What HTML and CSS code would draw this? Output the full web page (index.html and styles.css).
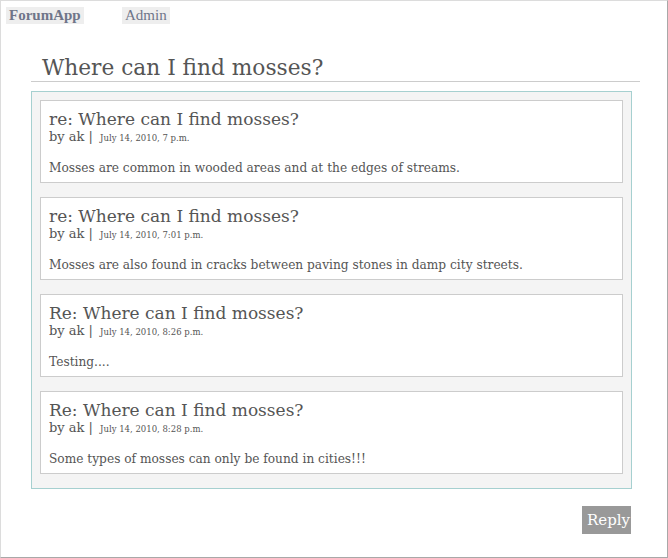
FILE: index.html
```html
<!DOCTYPE html>
<html>
<head>
<meta charset="utf-8">
<link rel="stylesheet" href="styles.css">
</head>
<body>
<div class="frame">
  <nav class="topnav">
    <a class="nav-link brand" href="#">ForumApp</a>
    <a class="nav-link" href="#">Admin</a>
  </nav>
  <main class="content">
    <h1 class="title">Where can I find mosses?</h1>
    <div class="thread">
      <div class="post">
        <h2 class="post-title">re: Where can I find mosses?</h2>
        <div class="meta">by ak <span class="sep">|</span> <span class="date">July 14, 2010, 7 p.m.</span></div>
        <p class="body">Mosses are common in wooded areas and at the edges of streams.</p>
      </div>
      <div class="post">
        <h2 class="post-title">re: Where can I find mosses?</h2>
        <div class="meta">by ak <span class="sep">|</span> <span class="date">July 14, 2010, 7:01 p.m.</span></div>
        <p class="body">Mosses are also found in cracks between paving stones in damp city streets.</p>
      </div>
      <div class="post">
        <h2 class="post-title">Re: Where can I find mosses?</h2>
        <div class="meta">by ak <span class="sep">|</span> <span class="date">July 14, 2010, 8:26 p.m.</span></div>
        <p class="body">Testing....</p>
      </div>
      <div class="post">
        <h2 class="post-title">Re: Where can I find mosses?</h2>
        <div class="meta">by ak <span class="sep">|</span> <span class="date">July 14, 2010, 8:28 p.m.</span></div>
        <p class="body">Some types of mosses can only be found in cities!!!</p>
      </div>
    </div>
    <div class="actions">
      <a class="reply" href="#">Reply</a>
    </div>
  </main>
</div>
</body>
</html>
```
FILE: styles.css
```css
html, body {
  margin: 0;
  padding: 0;
  background: #fff;
}
body {
  font-family: "DejaVu Serif", serif;
  color: #555;
}
.frame {
  box-sizing: border-box;
  width: 668px;
  height: 558px;
  border-top: 1px solid #dcdcdc;
  border-left: 1px solid #dcdcdc;
  border-right: 1px solid #a8a8a8;
  border-bottom: 1px solid #a8a8a8;
  padding: 6px 0 0 5px;
}
.topnav {
  display: flex;
  gap: 38px;
  height: 17px;
}
.nav-link {
  display: block;
  background: #eee;
  color: #6f7589;
  text-decoration: none;
  font-family: "Liberation Serif", serif;
  font-size: 15px;
  line-height: 17px;
  padding: 0 3px;
}
.brand {
  font-weight: bold;
  width: 72px;
}
.content {
  margin-left: 25px;
  width: 601px;
}
.title {
  margin: 31px 0 0 0;
  width: 598px;
  padding-left: 11px;
  font-size: 21.7px;
  font-weight: normal;
  line-height: 26px;
  color: #555;
  border-bottom: 1px solid #ccc;
}
.thread {
  margin-top: 9px;
  background: #f4f4f4;
  border: 1px solid #a6d0d0;
  padding: 8px 8px 14px 8px;
  display: flex;
  flex-direction: column;
  gap: 14px;
}
.post {
  background: #fff;
  border: 1px solid #ccc;
  padding: 8px 8px 0 8px;
  height: 73px;
}
.post-title {
  margin: 0;
  font-size: 17px;
  font-weight: normal;
  line-height: 20px;
  color: #555;
}
.meta {
  font-size: 13px;
  line-height: 16px;
}
.date {
  font-size: 8.5px;
  margin-left: 3px;
}
.body {
  margin: 14px 0 0 0;
  font-size: 12.2px;
  line-height: 16px;
}
.actions {
  display: flex;
  justify-content: flex-end;
  margin-top: 17px;
  padding-right: 1px;
}
.reply {
  display: block;
  background: #999;
  color: #fff;
  text-decoration: none;
  font-size: 15px;
  line-height: 28px;
  padding: 0 5px;
  width: 39px;
  text-align: center;
}
```
